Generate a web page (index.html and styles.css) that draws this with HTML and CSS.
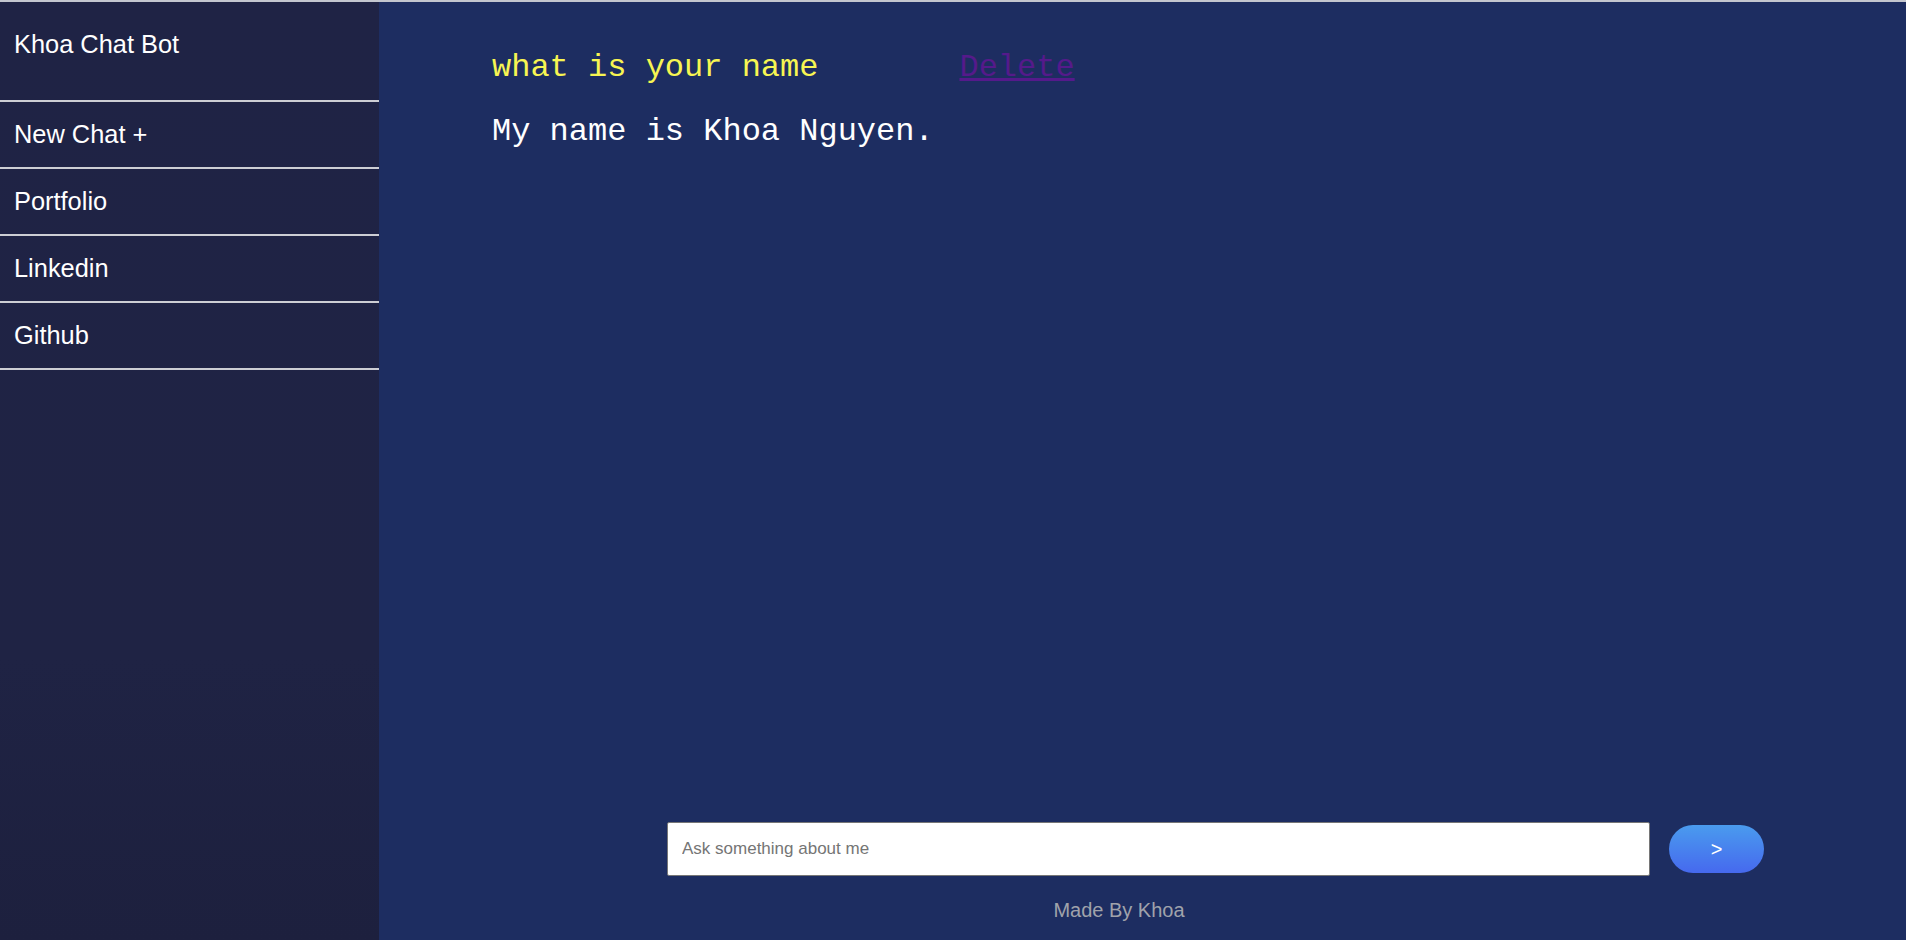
FILE: index.html
```html
<!DOCTYPE html>
<html lang="en">
<head>
<meta charset="utf-8">
<title>Khoa Chat Bot</title>
<link rel="stylesheet" href="styles.css">
</head>
<body>
<div class="app">
  <aside class="sidebar">
    <div class="brand">Khoa Chat Bot</div>
    <nav class="nav">
      <a class="nav-item" href="#">New Chat +</a>
      <a class="nav-item" href="#">Portfolio</a>
      <a class="nav-item" href="#">Linkedin</a>
      <a class="nav-item" href="#">Github</a>
    </nav>
  </aside>
  <main class="main">
    <section class="chat">
      <div class="msg-row">
        <span class="question">what is your name</span>
        <a class="delete" href="#">Delete</a>
      </div>
      <p class="answer">My name is Khoa Nguyen.</p>
    </section>
    <form class="composer">
      <input class="ask" type="text" placeholder="Ask something about me">
      <button class="send" type="button">&gt;</button>
    </form>
    <footer class="credit">Made By Khoa</footer>
  </main>
</div>
</body>
</html>
```
FILE: styles.css
```css
* { box-sizing: border-box; }

html, body {
  margin: 0;
  height: 100%;
}

body {
  border-top: 2px solid #c3c6cf;
  background: #1d2d61;
  font-family: "Liberation Sans", Arial, Helvetica, sans-serif;
  overflow: hidden;
}

.app {
  display: flex;
  height: 938px;
}

.sidebar {
  width: 379px;
  flex: 0 0 379px;
  background: linear-gradient(to bottom, #1f2345 0%, #1f2344 70%, #1d203e 100%);
  color: #fff;
  display: flex;
  flex-direction: column;
}

.brand {
  height: 98px;
  padding: 29px 0 0 14px;
  font-size: 25.4px;
  line-height: 27px;
}

.nav {
  display: flex;
  flex-direction: column;
  border-bottom: 2px solid #cdced4;
}

.nav-item {
  display: block;
  border-top: 2px solid #cdced4;
  height: 67px;
  padding: 19px 0 0 14px;
  font-size: 25.4px;
  line-height: 27px;
  color: #fff;
  text-decoration: none;
}

.main {
  flex: 1;
  display: flex;
  flex-direction: column;
  background: #1d2d61;
}

.chat {
  flex: 1;
  padding: 48px 0 0 113px;
  font-family: "Liberation Mono", "Courier New", monospace;
  font-size: 32px;
  line-height: 36px;
}

.msg-row {
  display: flex;
  align-items: baseline;
}

.question {
  color: #f7f552;
}

.delete {
  margin-left: 141px;
  color: #551a8b;
  text-decoration: underline;
}

.answer {
  margin: 28px 0 0;
  color: #fff;
}

.composer {
  display: flex;
  align-items: center;
  gap: 19px;
  padding-left: 288px;
  margin: 0;
}

.ask {
  width: 983px;
  height: 54px;
  border: 1px solid #767676;
  border-radius: 2px;
  background: #fff;
  padding: 0 14px;
  font-family: "Liberation Sans", Arial, sans-serif;
  font-size: 17px;
  color: #222;
  outline: none;
}

.ask::placeholder {
  color: #757575;
}

.send {
  width: 95px;
  height: 48px;
  border: none;
  border-radius: 24px;
  background: linear-gradient(to bottom, #4a9bee 0%, #4669ee 100%);
  color: #fff;
  font-family: "Liberation Sans", Arial, sans-serif;
  font-size: 20px;
  padding: 0;
  cursor: pointer;
}

.credit {
  padding: 23px 47px 18px 0;
  text-align: center;
  font-size: 20px;
  line-height: 23px;
  color: #a0a3ab;
}
```
